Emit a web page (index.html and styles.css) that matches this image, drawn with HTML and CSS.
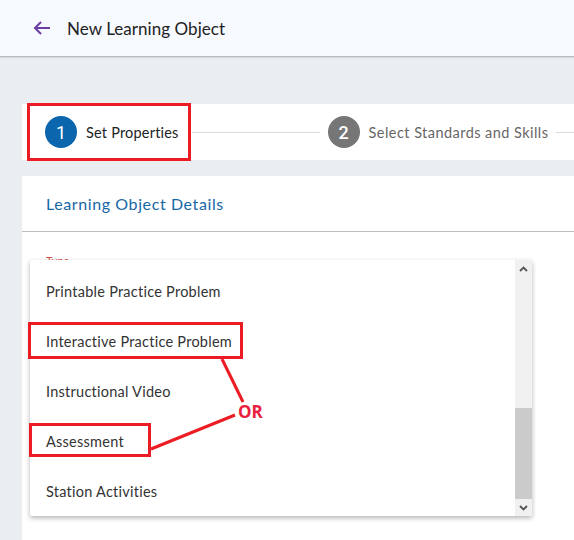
FILE: index.html
```html
<!DOCTYPE html>
<html>
<head>
<meta charset="utf-8">
<link rel="stylesheet" href="styles.css">
</head>
<body>
<header class="topbar">
  <svg class="back" width="18" height="14" viewBox="0 0 18 14"><path d="M17 7H2M8 1L2 7l6 6" fill="none" stroke="#6b3fa3" stroke-width="2"/></svg>
  <span class="title">New Learning Object</span>
</header>
<main class="main">
  <div class="stepper">
    <div class="step active"><span class="circle">1</span><span class="label">Set Properties</span></div>
    <div class="connector"></div>
    <div class="step"><span class="circle">2</span><span class="label">Select Standards and Skills</span></div>
    <div class="connector tail"></div>
  </div>
  <section class="card">
    <div class="card-head">Learning Object Details</div>
    <div class="card-body">
      <div class="field-label">Type</div>
      <div class="dropdown">
        <ul class="options">
          <li>Printable Practice Problem</li>
          <li>Interactive Practice Problem</li>
          <li>Instructional Video</li>
          <li>Assessment</li>
          <li>Station Activities</li>
        </ul>
        <div class="scrollbar">
          <div class="sb-btn"><svg width="9" height="6" viewBox="0 0 9 6"><path d="M1 5l3.5-3.5L8 5" fill="none" stroke="#555" stroke-width="1.8"/></svg></div>
          <div class="sb-track"><div class="sb-thumb"></div></div>
          <div class="sb-btn"><svg width="9" height="6" viewBox="0 0 9 6"><path d="M1 1l3.5 3.5L8 1" fill="none" stroke="#555" stroke-width="1.8"/></svg></div>
        </div>
      </div>
    </div>
  </section>
</main>
<svg class="annot" width="574" height="540" viewBox="0 0 574 540">
  <g fill="none" stroke="#ec1c24" stroke-width="3">
    <rect x="28.5" y="104.5" width="161" height="55"/>
    <rect x="29.5" y="323.5" width="212" height="34"/>
    <rect x="30.5" y="424.5" width="119" height="31"/>
    <line x1="222" y1="359" x2="243" y2="402"/>
    <line x1="235" y1="415" x2="151" y2="449"/>
  </g>
  <text class="or" x="238" y="418">OR</text>
</svg>
</body>
</html>
```
FILE: styles.css
```css
* { box-sizing: border-box; }
body {
  margin: 0;
  width: 574px;
  height: 540px;
  overflow: hidden;
  background: #eaeef1;
  font-family: Lato, "Noto Sans", sans-serif;
  position: relative;
}
.topbar {
  height: 57px;
  background: #f6f9fe;
  border-bottom: 1px solid #b7babe;
  box-shadow: 0 1px 1px rgba(0,0,0,0.08);
  display: flex;
  align-items: center;
  padding-left: 33px;
}
.back { display: block; }
.title {
  margin-left: 16px;
  font-size: 17px;
  color: #222;
  letter-spacing: 0.05px;
}
.main {
  padding: 47px 0 0 22px;
}
.stepper {
  height: 56px;
  background: #fff;
  display: flex;
  align-items: center;
  padding-left: 23px;
}
.step {
  display: flex;
  align-items: center;
  gap: 9px;
  flex: none;
}
.circle {
  width: 32px;
  height: 32px;
  border-radius: 50%;
  background: #767676;
  color: #fff;
  font-size: 18px;
  display: flex;
  align-items: center;
  justify-content: center;
  font-family: Roboto, sans-serif;
  font-weight: 500;
}
.step.active .circle { background: #0b66ae; font-weight: 400; }
.label {
  font-size: 14.5px;
  color: #666;
  letter-spacing: 0.3px;
}
.step .label { letter-spacing: 0.45px; }
.step.active .label { color: #222; letter-spacing: 0.2px; }
.connector {
  width: 128px;
  height: 1px;
  background: #dcdcdc;
  margin: 0 8px 0 13px;
}
.connector.tail { flex: 1; margin-left: 8px; margin-right: 0; }
.card {
  margin-top: 16px;
  background: #fff;
  height: 364px;
  position: relative;
}
.card-head {
  height: 56px;
  border-bottom: 1px solid #bdbdbd;
  display: flex;
  align-items: center;
  padding-left: 24px;
  font-size: 16px;
  color: #1767a6;
  letter-spacing: 0.6px;
}
.card-body {
  padding: 22px 0 0 24px;
}
.field-label {
  font-size: 11px;
  color: #d9534f;
  height: 12px;
  overflow: hidden;
}
.dropdown {
  position: absolute;
  left: 8px;
  top: 84px;
  width: 502px;
  height: 256px;
  background: #fff;
  box-shadow: 0 2px 5px rgba(0,0,0,0.3);
  border-radius: 2px;
  display: flex;
}
.options {
  list-style: none;
  margin: 0;
  padding: 6px 0 0 0;
  flex: 1;
}
.options li {
  height: 50px;
  display: flex;
  align-items: center;
  padding-left: 16px;
  font-size: 14.5px;
  color: #333;
  letter-spacing: 0.25px;
}
.scrollbar {
  width: 17px;
  background: #f1f1f1;
  display: flex;
  flex-direction: column;
}
.sb-btn {
  height: 17px;
  display: flex;
  align-items: center;
  justify-content: center;
}
.sb-track {
  flex: 1;
  display: flex;
  flex-direction: column;
}
.sb-thumb {
  margin-top: auto;
  height: 91px;
  background: #cbcbcb;
}
.annot {
  position: absolute;
  left: 0;
  top: 0;
  pointer-events: none;
}
.or {
  font-family: "Open Sans", sans-serif;
  font-weight: 700;
  font-size: 17px;
  fill: #e8203e;
}
```
